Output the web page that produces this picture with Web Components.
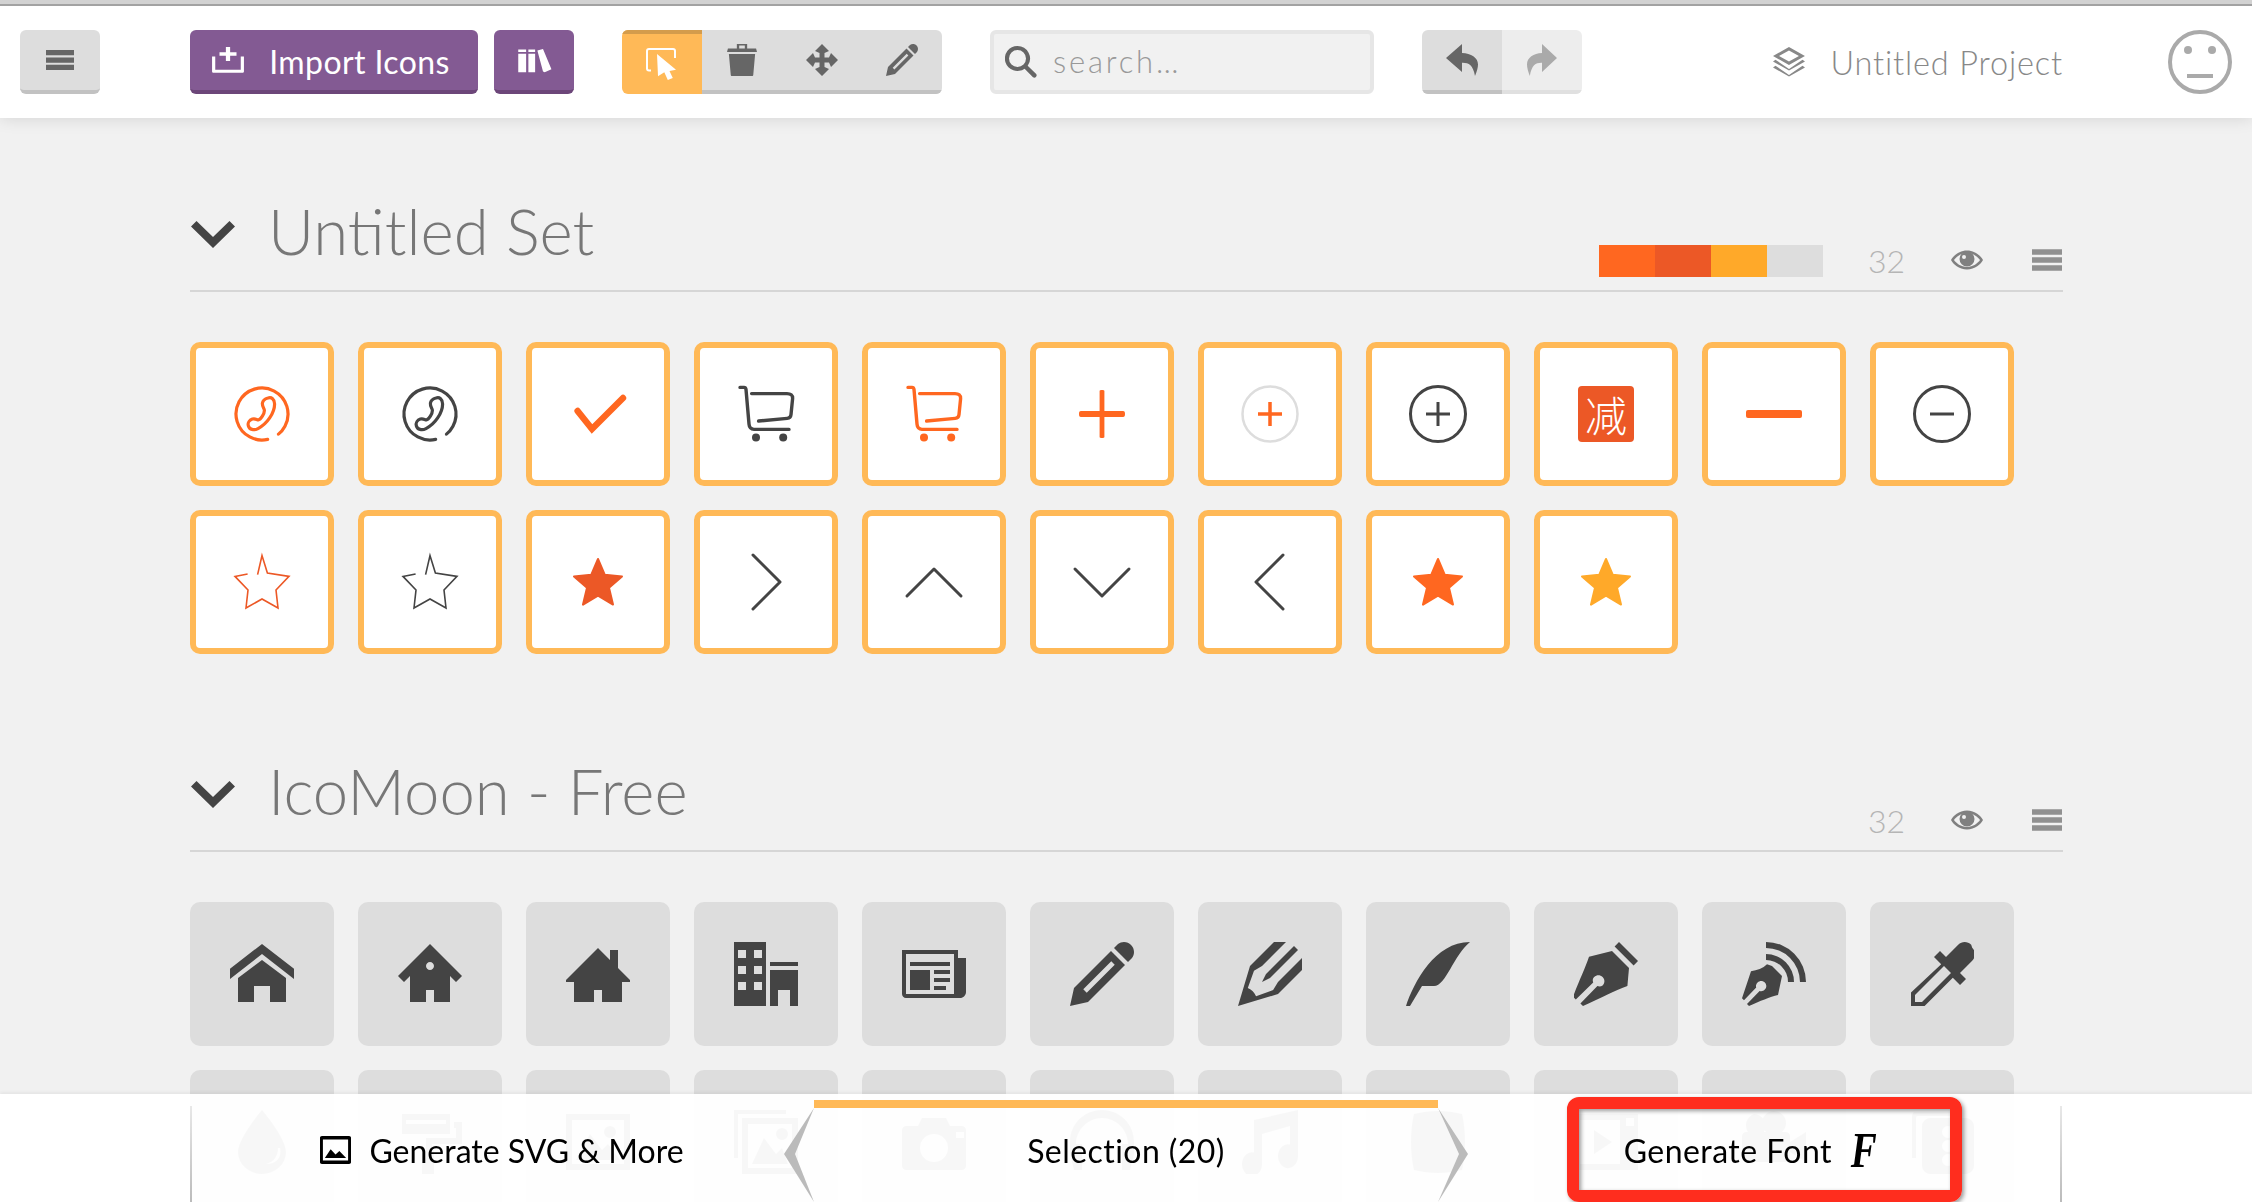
<!DOCTYPE html>
<html lang="en">
<head>
<meta charset="UTF-8">
<title>IcoMoon App</title>
<style>
  html, body { margin: 0; height: 100%; overflow: hidden; }
  body { background: #f1f1f1; font-family: Lato, "Noto Sans CJK SC", sans-serif; }
</style>
</head>
<body>
<icon-app></icon-app>

<script>
const ICONS = {
  menu: '<path d="M0 0h32v6H0zM0 8.500h32v6H0zM0 17h32v6H0z" transform="translate(0 4.500)"/>',
  importIcon: '<path d="M14 1h4v6h6v4h-6v6h-4v-6H8V7h6zM1 12h3v15h24V12h3v17c0 .8-.6 1.500-1.500 1.500h-27C1.600 30.500 1 29.800 1 29z"/>',
  library: '<path d="M2 3h7v27H2zM2 6v2h7V6zM11 3h6v27h-6zM11 6v2h6V6zM19 4l5-1.500 7.500 24-6 3.500-1.500-1z" fill-rule="evenodd"/>',
  select: '<path fill="none" stroke="currentColor" stroke-width="2" d="M5 22.500H3c-1 0-2-.8-2-2V3c0-1.200 1-2 2-2h24c1 0 2 .8 2 2v7"/><path d="M11 6l19 15.700-6.500 1.200 3.300 7-5 2.100-3.500-7.700-6.300 4z"/>',
  trash: '<path fill-rule="evenodd" d="M0 8l1-3.500h9.500V0h11v4.500H31l1 3.500zM13 1.500v3h6v-3zM2 10h28l-2 21c0 .5-.5 1-1 1H5c-.5 0-1-.5-1-1z"/>',
  move: '<path fill-rule="evenodd" d="M16 0l7 7-4.500 2v4.500H23L25 9l7 7-7 7-2-4.500h-4.500V23l4.500 2-7 7-7-7 4.500-2v-4.500H9L7 23l-7-7 7-7 2 4.500h4.500V9L9 7z"/>',
  pencil: '<path fill-rule="evenodd" d="M27 0c2.800 0 5 2.200 5 5 0 1.100-.4 2.200-1 3l-2 2-7-7 2-2c.8-.6 1.900-1 3-1zM2 23l-2 9 9-2 18.500-18.500-7-7zM22.400 11.400l-14 14-1.700-1.700 14-14z"/>',
  search: '<path fill-rule="evenodd" d="M12.500 0a12.500 12.500 0 0 1 10.200 19.700l8.500 8.300a2.300 2.300 0 0 1-3.200 3.200l-8.400-8.500A12.500 12.500 0 1 1 12.500 0zm0 4a8.500 8.500 0 1 0 0 17 8.500 8.500 0 0 0 0-17z"/>',
  undo: '<path d="M16 9V0L0 14l16 14v-9.300c6.500-.2 11 2 13 13.300 2-5 3-8.500 3-11.500C32 13.500 25 9.400 16 9z"/>',
  redo: '<path d="M16 9V0l16 14-16 14v-9.300c-6.500-.2-11 2-13 13.300-2-5-3-8.500-3-11.500C0 13.500 7 9.400 16 9z"/>',
  layers: '<path fill-rule="evenodd" d="M16 1l12 9-12 9-12-9zM16 4.400L8.500 10l7.500 5.600 7.500-5.600z" transform="translate(-5.300 0) scale(1.330 1)"/><path d="M0 15.500l2.500-1.700L16 23 29.500 13.800l2.500 1.700-16 9zM0 21.500l2.500-1.700L16 29 29.500 19.800l2.500 1.700-16 9z"/>',
  eye: '<path fill-rule="evenodd" d="M16 6.500C24 6.500 30 12 32 16 30 20 24 25.500 16 25.500 8 25.500 2 20 0 16 2 12 8 6.500 16 6.500zM16 9C10 9 5 13 3 16c2 3 7 7 13 7s11-4 13-7c-2-3-7-7-13-7z"/><path fill-rule="evenodd" d="M16 7.500a7.500 7.500 0 1 1 0 15 7.500 7.500 0 0 1 0-15zM13 11a2 2 0 1 0 0 4 2 2 0 0 0 0-4z"/>',
  caret: '<path d="M0 5.500L4 1.500 16 13 28 1.500 32 5.500 16 21z"/>',
  image: '<path fill-rule="evenodd" d="M2 0h28c1.100 0 2 .9 2 2v28c0 1.100-.9 2-2 2H2c-1.100 0-2-.9-2-2V2C0 .9.900 0 2 0zm1 4v24h26V4zM5 25l6-10 5 6 4-4 7 8z"/>',

  phone: '<circle cx="16" cy="16" r="13" fill="none" stroke="currentColor" stroke-width="1.600" stroke-linecap="round" stroke-dasharray="66 6" transform="rotate(118 16 16)"/><path fill="none" stroke="currentColor" stroke-width="1.600" stroke-linecap="round" d="M19 8c1.700-.6 3.300.5 3.300 3 0 4.500-3.800 10-8.300 12.300-2 1-4.300.5-4.800-1.300-.5-1.500.5-3 2-3.500 1.500-.4 2.300.5 3 .4 1.300-.1 3-3.200 3-4.700 0-1.100-1.200-1.700-1-3.600.2-1.300 1.200-2.200 2.800-2.600z"/>',
  check: '<path fill="none" stroke="currentColor" stroke-width="3.200" stroke-linecap="round" d="M5.800 14.500L13 23.500 28.500 8"/>',
  cart: '<g fill="none" stroke="currentColor" stroke-width="1.700" stroke-linecap="round" stroke-linejoin="round"><path d="M3 2.700h2c.5 0 .9.400 1 1L7.500 21c.1 1.500 1 2.700 2.500 2.700h17.500"/><path d="M8.800 5.800h17.700c1.800 0 2.900.8 2.800 2.500l-.8 8c-.1 1.100-.8 1.800-1.900 1.900l-14.300 1.300"/></g><circle cx="11" cy="27.800" r="2"/><circle cx="24.600" cy="27.800" r="2"/>',
  plus: '<path d="M14.800 4.500c0-.4.500-.5 1.200-.5s1.200.1 1.200.5V14.500h9.300c.8 0 1 .6 1 1.500s-.2 1.500-1 1.500H17.200v10c0 .4-.5.5-1.200.5s-1.200-.1-1.200-.5v-10H5.500c-.8 0-1-.6-1-1.500s.2-1.500 1-1.500h9.300z"/>',
  minus: '<rect x="2" y="14" width="28" height="4" rx="1"/>',
  star: '<path fill="none" stroke="currentColor" stroke-width=".8" d="M13.800 12.300L16 2.800l2.700 8.700 10.800 1.700-6.500 6.800 1 9-8-4.500-8 4.500 1-9-6.500-6.800 6.300-1.200"/>',
  starFill: '<path stroke="currentColor" stroke-width="1" stroke-linejoin="round" d="M16 4.500l3.400 7.900 8.600.8-6.500 5.700 2 8.400L16 22.800l-7.500 4.500 2-8.400L4 13.200l8.600-.8z"/>',
  right: '<path fill="none" stroke="currentColor" stroke-width="1.500" stroke-linecap="round" stroke-linejoin="round" d="M9.500 2.500L23 16 9.500 29.500"/>',
  up: '<path fill="none" stroke="currentColor" stroke-width="1.500" stroke-linecap="round" stroke-linejoin="round" d="M2.500 23L16 9.500 29.500 23"/>',
  down: '<path fill="none" stroke="currentColor" stroke-width="1.500" stroke-linecap="round" stroke-linejoin="round" d="M2.500 9.500L16 23 29.500 9.500"/>',
  left: '<path fill="none" stroke="currentColor" stroke-width="1.500" stroke-linecap="round" stroke-linejoin="round" d="M22.500 2.500L9 16l13.500 13.500"/>',

  home: '<path d="M32 18.451l-16-12.420-16 12.420v-5.064l16-12.420 16 12.420zM28 18v12h-8v-8h-8v8h-8v-12l12-9z"/>',
  home2: '<path fill-rule="evenodd" d="M16 1L0 17l3 3 3-3v13h8v-6h4v6h8V17l3 3 3-3zM16 14c-1.105 0-2-.895-2-2s.895-2 2-2 2 .895 2 2-.895 2-2 2z"/>',
  home3: '<path d="M32 19l-6-6v-9h-4v5l-6-6-16 16v1h4v10h10v-6h4v6h10v-10h4z"/>',
  office: '<path fill-rule="evenodd" d="M0 32h16v-32h-16v32zM10 4h4v4h-4v-4zM10 12h4v4h-4v-4zM10 20h4v4h-4v-4zM2 4h4v4h-4v-4zM2 12h4v4h-4v-4zM2 20h4v4h-4v-4zM18 10h14v2h-14zM18 32h4v-8h6v8h4v-18h-14z"/>',
  newspaper: '<path fill-rule="evenodd" d="M28 8v-4h-28v22c0 1.105.895 2 2 2h27c1.657 0 3-1.343 3-3v-17h-4zM26 26h-24v-20h24v20zM4 10h20v2h-20zM16 14h8v2h-8zM16 18h8v2h-8zM16 22h6v2h-6zM4 14h10v10h-10z"/>',
  pen1: '<path fill-rule="evenodd" d="M27 0c2.761 0 5 2.239 5 5 0 1.126-.372 2.164-1 3l-2 2-7-7 2-2c.836-.628 1.874-1 3-1zM2 23l-2 9 9-2 18.500-18.500-7-7-18.500 18.500zM22.362 11.362l-14 14-1.724-1.724 14-14 1.724 1.724z"/>',
  pen2: '<path d="M12 20l4-2 14-14-2-2-14 14-2 4zM9.041 27.097c-.989-2.085-2.052-3.149-4.137-4.137l3.097-8.525 4-2.435 12-12h-6l-12 12-6 20 20-6 12-12v-6l-12 12-2.435 4z"/>',
  quill: '<path d="M0 32c4-12 14.469-32 32-32-8.219 6.594-12 22-18 22s-6 0-6 0l-6 10h-2z"/>',
  pen3: '<path fill-rule="evenodd" d="M22.500 0l9.500 9.500-2.200 2.200-9.500-9.500zM19 4.500l8.500 8.500-.8 9c-6 2-13 6-22.200 10l-1.300-1.300 8.500-8.700c.8.3 1.800.3 2.600-.3 1.200-1.200 1.200-3 0-4.200s-3-1.200-4.200 0c-.8.8-.9 1.800-.5 2.700l-8.700 8.600-1.400-1.400c3-8 6-14 8-20z"/>',
  blog: '<path fill-rule="evenodd" d="M12 0a20 20 0 0 1 20 20h-3A17 17 0 0 0 12 3zM12 6a14 14 0 0 1 14 14h-3A11 11 0 0 0 12 9zM15 12l5 5-2 9.500c-4 1-9 3-14.500 5.500l-1-1 6.300-6.500c1 .3 2 0 2.600-.7 1-1 1-2.600 0-3.600s-2.600-1-3.600 0c-.7.7-1 1.700-.7 2.600l-6.100 6.300-1-1c1.500-4.500 3-9 4.500-13.500 3-.5 6-1.500 8-3.500z"/>',
  dropper: '<path fill-rule="evenodd" d="M30.600 1.400c-1.800-1.800-4.700-1.800-6.500 0l-6.100 6.100-3-3-3 3 3.600 3.600L.5 25.200V32h6.800l14.100-14.100 3.600 3.600 3-3-3-3 6.100-6.100c1.800-1.800 1.800-4.700 0-6.500zM6 30H2.500v-3.500L17 12l3.500 3.500z"/>',

  droplet: '<path fill-rule="evenodd" d="M16 0C16 0 4 14 4 21a12 11 0 0 0 24 0C28 14 16 0 16 0zM24 19c0 4-2 7-6 8 5 0 8-3 7-8z"/>',
  paint: '<path fill-rule="evenodd" d="M2 2h24v10H2zM4 5v2h20V5zM28 6h4v11H17v3h1v12h-6V20h2v-6h15V9h-1z"/>',
  picture: '<path fill-rule="evenodd" d="M0 2h32v28H0zM3 5v22h26V5zM5 25l7-13 6 8 3-3 6 8zM22 8a3 3 0 1 1 0 6 3 3 0 0 1 0-6z"/>',
  pictures: '<path fill-rule="evenodd" d="M0 0h26v2H2v22H0zM4 4h28v28H4zM7 7v22h22V7zM9 27l6-13 6 8 3-3 3 8zM24 9a3 3 0 1 1 0 6 3 3 0 0 1 0-6z"/>',
  camera: '<path fill-rule="evenodd" d="M10 4h12l2 4h6c1 0 2 1 2 2v18c0 1-1 2-2 2H2c-1 0-2-1-2-2V10c0-1 1-2 2-2h6zM16 12a7 7 0 1 0 0 14 7 7 0 0 0 0-14zM27 11v3h4v-3z"/>',
  headphones: '<path fill-rule="evenodd" d="M16 0C7 0 0 7 0 16v6l2 8h4V17H3c0-7 6-13 13-13s13 6 13 13h-3v13h4l2-8v-6c0-9-7-16-16-16z"/>',
  music: '<path fill-rule="evenodd" d="M30 0v23a5 6 0 1 1-4-5.800V8l-14 4v15a5 6 0 1 1-4-5.800V5z"/>',
  play: '<path d="M4 2c8-2 16-2 24 0 2 8 2 20 0 28-8 2-16 2-24 0-2-8-2-20 0-28z"/>',
  film: '<path fill-rule="evenodd" d="M0 2h32v28H0zM26 4v4h4V4zM3 5v22h20V5zM10 10l9 6-9 6z"/>',
  video: '<path d="M6 2a6 6 0 0 1 5 9h1a6 6 0 1 1 8 0h2c1 0 2 1 2 2v3l8-5v15l-8-5v3c0 1-1 2-2 2H2c-1 0-2-1-2-2V13c0-1 1-2 2-2h1a6 6 0 0 1 3-9z"/>',
  dice: '<path fill-rule="evenodd" d="M10 4h18c2 0 4 2 4 4v20c0 2-2 4-4 4H10c-2 0-4-2-4-4V8c0-2 2-4 4-4zM19 8a3 3 0 1 0 0 6 3 3 0 0 0 0-6zM19 15a3 3 0 1 0 0 6 3 3 0 0 0 0-6zM19 22a3 3 0 1 0 0 6 3 3 0 0 0 0-6zM2 1h18v2H4c-1 0-1 1-1 1v20H1V3c0-1 1-2 1-2z"/>'
};

class MoonIcon extends HTMLElement {
  constructor() {
    super();
    const size = this.getAttribute("size") || 64;
    const h = this.getAttribute("h") || size;
    const name = this.getAttribute("name");
    this.attachShadow({ mode: "open" }).innerHTML = `
      <style>
        :host { display: inline-flex; line-height: 0; flex: none; }
        svg { width: ${size}px; height: ${h}px; fill: currentColor; }
      </style>
      <svg viewBox="0 0 32 32" preserveAspectRatio="none" aria-hidden="true">${ICONS[name]}</svg>`;
  }
}
customElements.define("moon-icon", MoonIcon);

const cellTpl = document.createElement("template");
cellTpl.innerHTML = `
  <style>
    :host {
      display: flex; align-items: center; justify-content: center; gap: 24px;
      box-sizing: border-box; height: 64px; min-width: 80px;
      background: var(--bg, #ddd); color: var(--fg, #666);
      border-bottom: 4px solid var(--edge, #c2c2c2);
      border-radius: var(--r, 6px);
      font-size: 32px;
    }
    :host([active]) { background: #ffb957; border-bottom: 0; border-top: 4px solid #d49c4c; color: #fff; }
  </style>
  <slot></slot>`;
class ToolCell extends HTMLElement {
  constructor() {
    super();
    this.attachShadow({ mode: "open" }).appendChild(cellTpl.content.cloneNode(true));
  }
}
customElements.define("tool-cell", ToolCell);

const groupTpl = document.createElement("template");
groupTpl.innerHTML = `
  <style>
    :host { display: flex; border-radius: 6px; overflow: hidden; flex: none; }
  </style>
  <slot></slot>`;
class ToolGroup extends HTMLElement {
  constructor() {
    super();
    this.attachShadow({ mode: "open" }).appendChild(groupTpl.content.cloneNode(true));
  }
}
customElements.define("tool-group", ToolGroup);

class TopBar extends HTMLElement {
  constructor() {
    super();
    this.attachShadow({ mode: "open" }).innerHTML = `
      <style>
        :host {
          display: flex; align-items: center; box-sizing: border-box;
          height: 118px; padding: 6px 20px 0 20px;
          background: #fff;
          box-shadow: 0 0 16px rgba(0,0,0,.13);
          position: relative; z-index: 2;
        }
        .strip { position: absolute; left: 0; right: 0; top: 0; height: 4px; background: #d2d2d2; border-bottom: 2px solid #a2a2a2; }
        .menu { margin-right: 90px; }
        .purple { --bg: #835a93; --fg: #fff; --edge: #6c4679; }
        .import { width: 288px; margin-right: 16px; padding: 0 7px 0 0; letter-spacing: .4px; }
        .import span { position: relative; top: 1px; }
        .lib { width: 80px; margin-right: 48px; }
        tool-group { margin-right: 48px; }
        tool-group tool-cell { --r: 0; width: 80px; }
        .search {
          width: 384px; height: 64px; margin-right: 48px; box-sizing: border-box;
          display: flex; align-items: center; gap: 16px; padding: 0 0 0 11px;
          background: #f1f1f1; border: 4px solid #e6e6e6; border-radius: 6px;
          color: #666; font-size: 31px; font-weight: 300;
        }
        .search span { color: #999; letter-spacing: 2.800px; position: relative; top: -1px; }
        .redo { --bg: #ededed; --fg: #aaa; --edge: #e0e0e0; }
        .project {
          display: flex; align-items: center; gap: 25px; margin-left: auto;
          color: #888; font-size: 32.500px; font-weight: 300; letter-spacing: .85px;
        }
        .face { width: 64px; height: 64px; margin-left: 105px; flex: none; }
      </style>
      <div class="strip"></div>
      <tool-cell class="menu"><moon-icon name="menu" size="28" h="28"></moon-icon></tool-cell>
      <tool-cell class="purple import"><moon-icon name="importIcon" size="34" h="28"></moon-icon><span>Import Icons</span></tool-cell>
      <tool-cell class="purple lib"><moon-icon name="library" size="36" h="27"></moon-icon></tool-cell>
      <tool-group>
        <tool-cell active><moon-icon name="select" size="32"></moon-icon></tool-cell>
        <tool-cell><moon-icon name="trash" size="30" h="32"></moon-icon></tool-cell>
        <tool-cell><moon-icon name="move" size="32"></moon-icon></tool-cell>
        <tool-cell><moon-icon name="pencil" size="32"></moon-icon></tool-cell>
      </tool-group>
      <div class="search"><moon-icon name="search" size="32"></moon-icon><span>search…</span></div>
      <tool-group>
        <tool-cell><moon-icon name="undo" size="32"></moon-icon></tool-cell>
        <tool-cell class="redo"><moon-icon name="redo" size="30" h="32"></moon-icon></tool-cell>
      </tool-group>
      <div class="project"><moon-icon name="layers" size="32"></moon-icon><span>Untitled Project</span></div>
      <svg class="face" viewBox="0 0 64 64" aria-hidden="true">
        <circle cx="32" cy="32" r="30" fill="none" stroke="#aaa" stroke-width="4"/>
        <circle cx="20" cy="20" r="4" fill="#aaa"/><circle cx="44" cy="20" r="4" fill="#aaa"/>
        <rect x="19" y="44" width="26" height="4" fill="#aaa"/>
      </svg>`;
  }
}
customElements.define("top-bar", TopBar);

class IconCard extends HTMLElement {
  constructor() {
    super();
    this.attachShadow({ mode: "open" }).innerHTML = `
      <style>
        :host {
          display: flex; align-items: center; justify-content: center;
          box-sizing: border-box; width: 144px; height: 144px;
          background: #ddd; color: #444; border-radius: 10px;
        }
        :host([picked]) { background: #fff; border: 6px solid #ffb957; }
      </style>
      <slot></slot>`;
  }
}
customElements.define("icon-card", IconCard);

class SetSection extends HTMLElement {
  constructor() {
    super();
    const title = this.getAttribute("title");
    const palette = this.hasAttribute("palette");
    this.attachShadow({ mode: "open" }).innerHTML = `
      <style>
        :host { display: block; }
        header {
          display: flex; align-items: center; height: 92px; box-sizing: border-box;
          border-bottom: 2px solid #d6d6d6;
        }
        .caret { color: #444; margin: 0 33px 0 1px; position: relative; top: -4px; }
        h2 {
          margin: 0; font-size: 63.500px; line-height: 64px; font-weight: 300; color: #777;
          position: relative; top: -14px;
        }
        .tools { margin-left: auto; display: flex; align-items: center; position: relative; top: 15px; color: #808080; padding-right: 1px; }
        .swatches { display: flex; margin-right: 45px; position: relative; top: 1px; }
        .swatches i { width: 56px; height: 32px; }
        .count { width: 83px; font-size: 32px; font-weight: 300; color: #b5b5b5; }
        .list { margin-left: 49px; color: #909090; }
        .grid { display: grid; grid-template-columns: repeat(11, 144px); gap: 24px; margin-top: 50px; }
      </style>
      <header>
        <moon-icon class="caret" name="caret" size="44" h="44"></moon-icon>
        <h2>${title}</h2>
        <div class="tools">
          ${palette ? `<div class="swatches"><i style="background:#ff6720"></i><i style="background:#ec5826"></i><i style="background:#ffa929"></i><i style="background:#ddd"></i></div>` : ""}
          <span class="count">32</span>
          <moon-icon name="eye" size="32"></moon-icon>
          <moon-icon class="list" name="menu" size="30" h="30"></moon-icon>
        </div>
      </header>
      <div class="grid"><slot></slot></div>`;
  }
}
customElements.define("set-section", SetSection);

class GenTab extends HTMLElement {
  constructor() {
    super();
    this.attachShadow({ mode: "open" }).innerHTML = `
      <style>
        :host {
          display: flex; align-items: center; justify-content: center; gap: 18px;
          position: relative; padding-top: 4px;
          font-size: 32px; color: #000;
        }
        :host([active])::before {
          content: ""; position: absolute; left: 0; right: 0; top: 6px; height: 8px; background: #ffb957;
        }
      </style>
      <slot></slot>`;
  }
}
customElements.define("gen-tab", GenTab);

class BottomBar extends HTMLElement {
  constructor() {
    super();
    this.attachShadow({ mode: "open" }).innerHTML = `
      <style>
        :host {
          position: fixed; left: 0; right: 0; bottom: 0; height: 108px; z-index: 3;
          background: rgba(255,255,255,.96);
          box-shadow: 0 -2px 3px rgba(0,0,0,.05);
        }
        .tabs {
          display: grid; grid-template-columns: repeat(3, 624px);
          margin-left: 190px; width: 1872px; height: 100%;
          position: relative;
        }
        .tabs::before, .tabs::after {
          content: ""; position: absolute; top: 12px; bottom: 0; width: 2px;
          background: linear-gradient(#e8e8e8, #bbb);
        }
        .tabs::before { left: 0; }
        .tabs::after { right: 0; }
        svg.arrow { position: absolute; top: 14px; width: 30px; height: 94px; fill: #bbb; }
        .arrow.l { left: 594px; }
        .arrow.r { left: 1248px; }
        .spaced { letter-spacing: .45px; }
        .script {
          display: inline-block; font: italic 700 50px/40px "Liberation Serif", serif; color: #000;
          transform: scaleX(.78); margin: 0 -4px 0 -3px;
        }
        .mark {
          position: absolute; left: 1567px; top: 3px; width: 395px; height: 105px; box-sizing: border-box;
          border: 12px solid #ff2d1e; border-radius: 12px;
          box-shadow: 2px 2px 4px rgba(0,0,0,.4), inset 2px 2px 4px rgba(0,0,0,.4);
          pointer-events: none;
        }
      </style>
      <div class="tabs">
        <gen-tab><moon-icon name="image" size="31" h="28"></moon-icon><span>Generate SVG &amp; More</span></gen-tab>
        <gen-tab active><span class="spaced">Selection (20)</span></gen-tab>
        <gen-tab><span class="spaced">Generate Font</span><span class="script">F</span></gen-tab>
        <svg class="arrow l" viewBox="0 0 30 94" aria-hidden="true"><path d="M30 0L0 46l30 48-19-48z"/></svg>
        <svg class="arrow r" viewBox="0 0 30 94" aria-hidden="true"><path d="M0 0l30 46L0 94l21-48z"/></svg>
      </div>
      <div class="mark"></div>`;
  }
}
customElements.define("bottom-bar", BottomBar);

class IconApp extends HTMLElement {
  constructor() {
    super();
    const ic = (n, c, s = 64, extra = "") => `<icon-card picked><moon-icon name="${n}" size="${s}" style="color:${c}" ${extra}></moon-icon></icon-card>`;
    const OR = "#ff6720", RD = "#ec5826", DK = "#444", AM = "#ffa929";
    const ring = (stroke, inner, w, mark, mw) => `<icon-card picked><svg width="64" height="64" viewBox="0 0 64 64" aria-hidden="true">
        <circle cx="32" cy="32" r="27.500" fill="none" stroke="${stroke}" stroke-width="${w}"/>
        <path d="${mark}" stroke="${inner}" stroke-width="${mw}" fill="none"/></svg></icon-card>`;
    const picked = [
      ic("phone", OR), ic("phone", DK), ic("check", OR), ic("cart", DK), ic("cart", OR), ic("plus", OR),
      ring("#ddd", OR, 2.5, "M20 32h24M32 20v24", 3.5),
      ring(DK, DK, 3, "M20 32h24M32 20v24", 3),
      `<icon-card picked><span style="display:flex;align-items:center;justify-content:center;width:56px;height:56px;background:#ec5826;border-radius:4px;color:#fff;font:300 42px 'Noto Sans CJK SC',sans-serif;line-height:56px">减</span></icon-card>`,
      ic("minus", OR), ring(DK, DK, 3, "M20 32h24", 3),
      ic("star", RD), ic("star", DK), ic("starFill", RD), ic("right", DK), ic("up", DK), ic("down", DK), ic("left", DK),
      ic("starFill", OR), ic("starFill", AM)
    ].join("");
    const free = ["home", "home2", "home3", "office", "newspaper", "pen1", "pen2", "quill", "pen3", "blog", "dropper",
      "droplet", "paint", "picture", "pictures", "camera", "headphones", "music", "play", "film", "video", "dice"]
      .map(n => `<icon-card><moon-icon name="${n}"></moon-icon></icon-card>`).join("");
    this.attachShadow({ mode: "open" }).innerHTML = `
      <style>
        :host { display: block; }
        main { display: flex; flex-direction: column; gap: 106px; padding: 82px 0 0 190px; width: 1873px; }
      </style>
      <top-bar></top-bar>
      <main>
        <set-section title="Untitled Set" palette>${picked}</set-section>
        <set-section title="IcoMoon - Free">${free}</set-section>
      </main>
      <bottom-bar></bottom-bar>`;
  }
}
customElements.define("icon-app", IconApp);
</script>
</body>
</html>
